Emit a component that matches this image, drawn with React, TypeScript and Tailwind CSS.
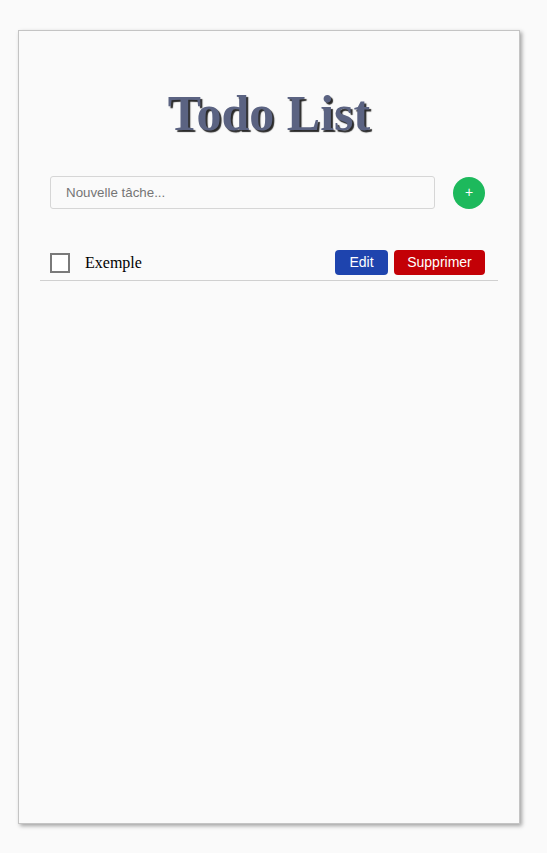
import React, { useState } from 'react';

type Todo = { id: number; text: string; done: boolean };

export default function App() {
  const [todos, setTodos] = useState<Todo[]>([{ id: 1, text: 'Exemple', done: false }]);
  const [draft, setDraft] = useState('');

  const add = () => {
    if (!draft.trim()) return;
    setTodos([...todos, { id: Date.now(), text: draft.trim(), done: false }]);
    setDraft('');
  };

  return (
    <div className="min-h-screen bg-[#fafafa] pl-[18px] pt-[30px] font-['Liberation_Serif',serif]">
      <div className="flex h-[794px] w-[502px] flex-col border border-[#c4c4c4] bg-[#fafafa] shadow-[2px_2px_4px_rgba(0,0,0,0.35)]">
        <h1 className="mt-[54px] text-center text-[50px] font-bold leading-[56px] text-[#5b6382] [text-shadow:2px_2px_1px_#2a2a2a]">
          Todo List
        </h1>

        <div className="mt-[35px] flex items-center pl-[31px] pr-[34px]">
          <input
            value={draft}
            onChange={(e) => setDraft(e.target.value)}
            placeholder="Nouvelle tâche..."
            className="h-[33px] w-[385px] rounded-[3px] border border-[#d6d6d6] bg-[#fafafa] pl-[15px] font-['Liberation_Sans',sans-serif] text-[13.33px] text-black outline-none placeholder:text-[#757575]"
          />
          <button
            onClick={add}
            className="ml-auto flex h-8 w-8 items-center justify-center rounded-full bg-[#1db95c] font-['Liberation_Sans',sans-serif] text-[14px] text-white"
          >
            +
          </button>
        </div>

        <ul className="mt-[36px] px-[21px]">
          {todos.map((t) => (
            <li
              key={t.id}
              className="flex items-center border-b border-[#d0d0d0] pb-[5px] pl-[10px] pr-[13px] pt-[5px]"
            >
              <button
                onClick={() => setTodos(todos.map((x) => (x.id === t.id ? { ...x, done: !x.done } : x)))}
                className="h-5 w-5 border-2 border-[#7a7a7a] bg-white"
              />
              <span className={`ml-[15px] text-[16px] text-black ${t.done ? 'line-through' : ''}`}>{t.text}</span>
              <div className="ml-auto flex gap-[6px] font-['Liberation_Sans',sans-serif] text-[14px] text-white">
                <button className="h-[25px] w-[53px] rounded-[4px] bg-[#1e44ae]">Edit</button>
                <button
                  onClick={() => setTodos(todos.filter((x) => x.id !== t.id))}
                  className="h-[25px] w-[91px] rounded-[4px] bg-[#c30006]"
                >
                  Supprimer
                </button>
              </div>
            </li>
          ))}
        </ul>
      </div>
    </div>
  );
}
